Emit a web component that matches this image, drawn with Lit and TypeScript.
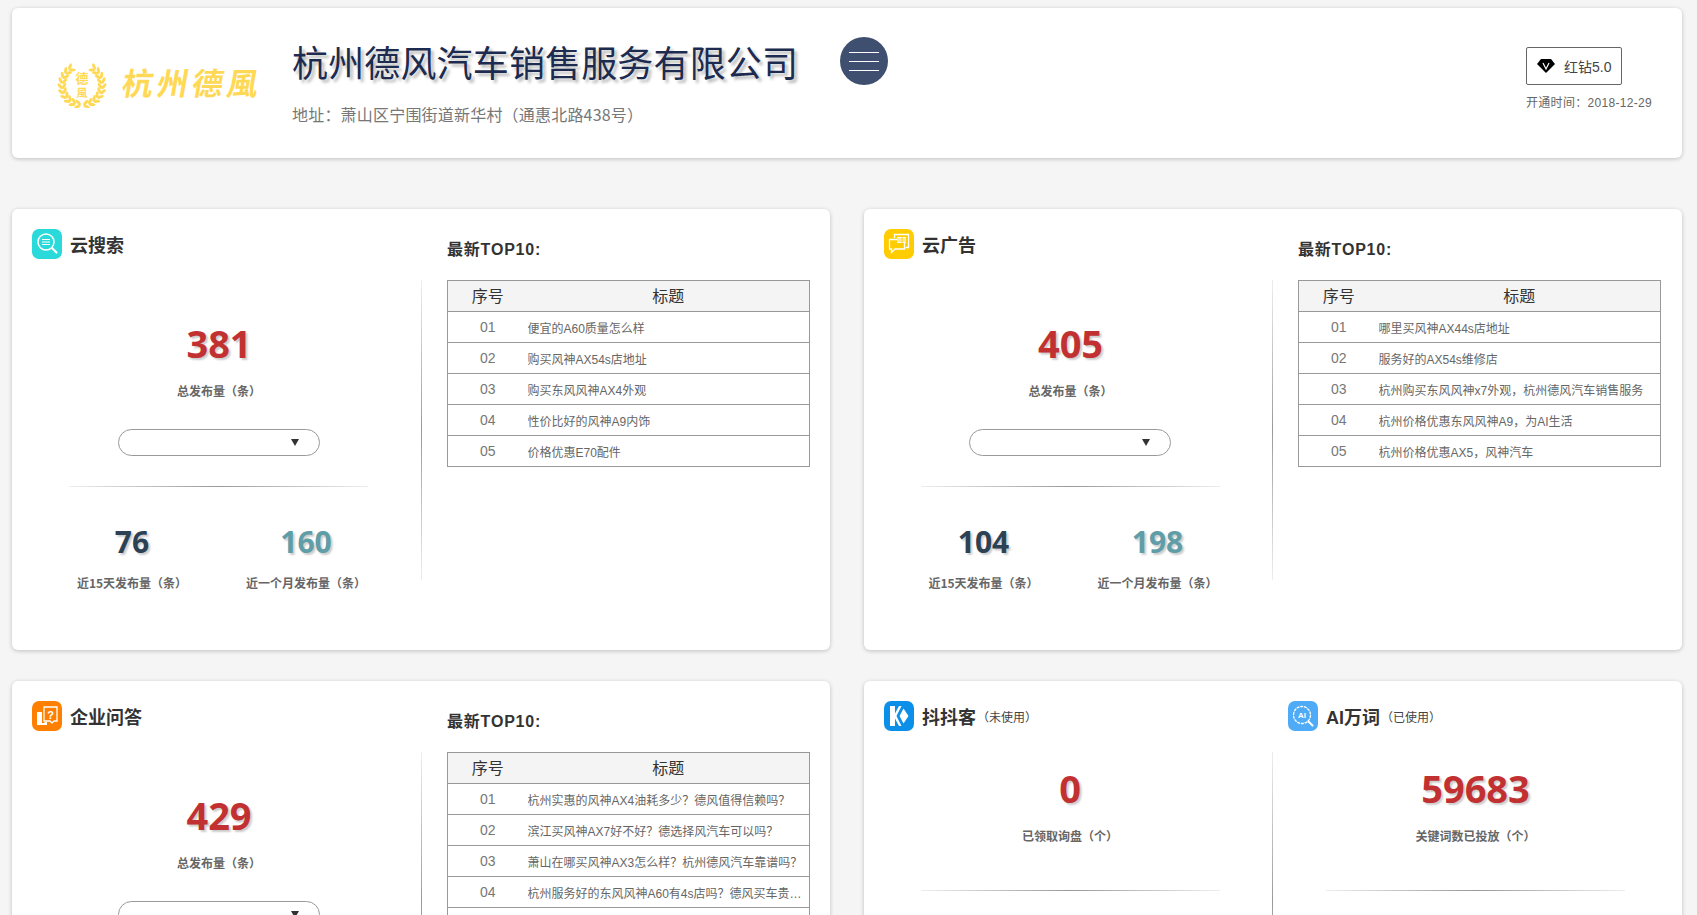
import { LitElement, html, css, svg } from "lit";
import { customElement } from "lit/decorators.js";

const icons: Record<string, any> = {
  search: svg`<circle cx="14" cy="13" r="8" fill="none" stroke="#fff" stroke-width="1.5"/>
    <path d="M10 10.500h8M10 13h8M10 15.500h8" stroke="#fff" stroke-width="1.200"/>
    <path d="M20 19l4.500 4.500" stroke="#fff" stroke-width="2.200" stroke-linecap="round"/>`,
  ad: svg`<path d="M10.500 9V5.500h14v13h-3" fill="none" stroke="#fff" stroke-width="1.300"/>
    <path d="M5.500 10.500h15v9.500H11l-3.500 3.500V20h-2z" fill="#ffcc00" stroke="#fff" stroke-width="1.300"/>
    <path d="M13 8h9v6h-9z" fill="#fff"/>
    <path d="M13 10h9M13 12h9M18 8v6" stroke="#ffcc00" stroke-width=".8"/>`,
  qa: svg`<path d="M12 6h13v14h-3l-2 2-2-2h-6z" fill="none" stroke="#fff" stroke-width="1.300"/>
    <path d="M5 11h5v11h2.500v-1H15v3H5z" fill="#fff"/>
    <text x="18.500" y="17.500" text-anchor="middle" font-size="11" font-weight="700" fill="#fff" font-family="Liberation Sans">?</text>`,
  kk: svg`<path d="M6 5h5v7.500L15 5h2.500l-5 10 5 10H15l-4-7.500V25H6z" fill="#fff"/>
    <path d="M19.500 7.500l5 7.500-5 7.500-4-7.500z" fill="#fff"/>`,
  ai: svg`<circle cx="14" cy="14" r="8.500" fill="none" stroke="#fff" stroke-width="1.300" stroke-dasharray="3 .8"/>
    <text x="14" y="17" text-anchor="middle" font-size="8" font-weight="700" fill="#fff" font-family="Liberation Sans">AI</text>
    <path d="M20.500 20.500l4 4" stroke="#fff" stroke-width="2" stroke-linecap="round"/>`,
};

type Panel = {
  icon: string; color: string; title: string; total: string;
  a?: string; b?: string; rows: string[];
};

const panels: Panel[] = [
  { icon: "search", color: "#2adada", title: "云搜索", total: "381", a: "76", b: "160",
    rows: ["便宜的A60质量怎么样", "购买风神AX54s店地址", "购买东风风神AX4外观", "性价比好的风神A9内饰", "价格优惠E70配件"] },
  { icon: "ad", color: "#ffcc00", title: "云广告", total: "405", a: "104", b: "198",
    rows: ["哪里买风神AX44s店地址", "服务好的AX54s维修店", "杭州购买东风风神x7外观，杭州德风汽车销售服务", "杭州价格优惠东风风神A9，为AI生活", "杭州价格优惠AX5，风神汽车"] },
  { icon: "qa", color: "#ff8000", title: "企业问答", total: "429",
    rows: ["杭州实惠的风神AX4油耗多少？德风值得信赖吗？", "滨江买风神AX7好不好？德选择风汽车可以吗？", "萧山在哪买风神AX3怎么样？杭州德风汽车靠谱吗？", "杭州服务好的东风风神A60有4s店吗？德风买车贵不贵？", ""] },
];

@customElement("app-root")
export class AppRoot extends LitElement {
  static styles = css`
    :host {
      display: block; height: 100vh; overflow: hidden; box-sizing: border-box;
      padding: 8px 15px 0 12px; background: #f5f5f5; color: #333;
      font-family: "Liberation Sans", "Noto Sans CJK SC", sans-serif;
    }
    .card { background: #fff; border-radius: 6px; box-shadow: 0 1px 4px rgba(0,0,0,.22); }
    .top { display: flex; align-items: flex-start; height: 150px; padding: 0 30px 0 44px; margin-bottom: 51px; }
    .logo { display: flex; align-items: center; width: 202px; height: 45px; margin-top: 54px; margin-right: 34px; color: #ffd955; }
    .logo svg { width: 52px; height: 46px; flex: none; }
    .logo-text { margin: 0 0 6px 15px; font-size: 31px; letter-spacing: 4px; white-space: nowrap; font-weight: 700; transform: skewX(-10deg); }
    .info { padding-top: 31px; }
    .name { font-size: 36px; line-height: 44px; letter-spacing: .15px; color: #1c2b4f; text-shadow: 3px 3px 3px #bbb; white-space: nowrap; font-family: "Noto Sans CJK SC", sans-serif; }
    .addr { margin-top: 19px; font-size: 16px; line-height: 24px; letter-spacing: .2px; color: #777; white-space: nowrap; font-family: "Noto Sans CJK SC", sans-serif; }
    .menu { display: flex; flex-direction: column; justify-content: center; gap: 8px; box-sizing: border-box; width: 48px; height: 48px; margin: 29px 0 0 42px; padding: 0 9px; border-radius: 50%; background: #3e4f6f; }
    .menu i { display: block; height: 1px; background: #fff; }
    .level { margin-left: auto; margin-top: 39px; width: 126px; }
    .badge { display: flex; align-items: center; box-sizing: border-box; width: 96px; height: 38px; padding-left: 10px; border: 1px solid #666; border-radius: 2px; font-size: 14px; color: #444; }
    .badge svg { width: 18px; height: 14px; margin-right: 9px; }
    .since { margin-top: 8px; font-size: 12px; line-height: 20px; color: #666; letter-spacing: .3px; white-space: nowrap; }
    .grid { display: grid; grid-template-columns: 818px 818px; column-gap: 34px; row-gap: 31px; }
    .panel { display: flex; height: 441px; }
    .half { width: 409px; flex: none; box-sizing: border-box; }
    .panel:nth-child(odd) .half.first { width: 410px; }
    .head { display: flex; align-items: center; height: 30px; margin: 20px 0 0 20px; font-size: 18px; font-weight: 700; color: #333; white-space: nowrap; }
    .head.r { margin-left: 15px; }
    .icon { width: 30px; height: 30px; flex: none; border-radius: 7px; margin-right: 8px; }
    .head small { margin-left: 1px; font-size: 12px; font-weight: 400; color: #444; font-family: "Noto Sans CJK SC", sans-serif; }
    .body { position: relative; display: flex; flex-direction: column; align-items: center; height: 300px; margin-top: 21px; padding-top: 38px; box-sizing: border-box; }
    .body.tight { padding-top: 11px; }
    .body.line::after { content: ""; position: absolute; top: 0; right: 0; bottom: 0; width: 1px; background: linear-gradient(to bottom, #eee, #999, #eee); }
    .body.pl { padding-left: 3px; }
    .body.pr { padding-right: 4px; }
    .num { font-family: "Open Sans", sans-serif; font-weight: 700; }
    .total { flex: none; font-size: 38px; line-height: 50px; color: #c23131; text-shadow: 2px 2px 2px #ccc; }
    .total.off { padding-left: 4px; }
    .lab { flex: none; font-size: 12px; line-height: 20px; color: #666; font-weight: 700; white-space: nowrap; font-family: "Noto Sans CJK SC", sans-serif; }
    .lab.off { padding-left: 4px; }
    .total + .lab { margin-top: 13px; }
    .select { display: flex; flex: none; align-items: center; justify-content: flex-end; box-sizing: border-box; width: 202px; height: 27px; margin: 28px 0 0 4px; padding-right: 20px; border: 1px solid #999; border-radius: 14px; }
    .panel:nth-child(2) .select { margin-left: 2px; }
    .select i { width: 0; height: 0; border-left: 4.500px solid transparent; border-right: 4.500px solid transparent; border-top: 7px solid #333; }
    .rule { flex: none; width: 299px; height: 1px; margin: 30px 0 0 3px; background: linear-gradient(to right, #eee, #999, #eee); }
    .rule.wide { margin-top: 44px; margin-left: 0; }
    .stats { display: grid; flex: none; grid-template-columns: 174px 174px; margin-top: 35px; text-align: center; }
    .stat { padding-left: 4px; font-size: 30px; line-height: 40px; text-shadow: 2px 2px 2px #ccc; }
    .stat.a { color: #2c4254; }
    .stat.b { color: #5f9ea8; }
    .stat + .lab { margin-top: 11px; }
    .top10 { width: 363px; margin-left: 25px; }
    .top10 h3 { margin: 30px 0 0; font-size: 16px; line-height: 22px; font-weight: 700; color: #333; letter-spacing: .8px; }
    table { width: 363px; margin-top: 19px; border-collapse: collapse; table-layout: fixed; border: 1px solid #999; }
    th, td { height: 31px; padding: 0; box-sizing: border-box; border-top: 1px solid #999; white-space: nowrap; font-weight: 400; text-align: center; }
    th { background: #f4f4f4; font-size: 16px; line-height: 16px; padding-bottom: 2px; color: #333; font-family: "Noto Sans CJK SC", sans-serif; }
    td.n { font-size: 14px; color: #777; }
    td.t { padding-right: 6px; font-size: 12px; color: #666; text-align: left; overflow: hidden; text-overflow: ellipsis; }
  `;

  private icon(name: string, color: string) {
    return html`<svg class="icon" viewBox="0 0 30 30" style="background:${color}">${icons[name]}</svg>`;
  }

  private wreath() {
    const leaves: any[] = [];
    for (const [radius, tilt] of [[22, 35], [18, -35]]) {
      for (let i = 0; i < 10; i++) {
        const deg = 78 - i * 15;
        const rad = (deg * Math.PI) / 180;
        for (const side of [-1, 1]) {
          const x = 26 + side * radius * Math.cos(rad);
          const y = 23 + radius * Math.sin(rad);
          const rot = side * (deg - 90 + tilt);
          leaves.push(svg`<ellipse cx=${x} cy=${y} rx="3.400" ry="1.500" fill="#ffd955"
            transform="rotate(${rot} ${x} ${y})"/>`);
        }
      }
    }
    return html`<svg viewBox="0 0 52 46">${leaves}
      <text x="26" y="21" text-anchor="middle" font-size="13" font-weight="700" fill="#ffd955" font-family="Noto Sans CJK SC">德</text>
      <text x="26" y="35" text-anchor="middle" font-size="11" font-weight="700" fill="#ffd955" font-family="Noto Sans CJK SC">風</text></svg>`;
  }

  private panel(p: Panel) {
    return html`<section class="card panel">
      <div class="half first">
        <div class="head">${this.icon(p.icon, p.color)}${p.title}</div>
        <div class="body line">
          <div class="num total off">${p.total}</div>
          <div class="lab off">总发布量（条）</div>
          <div class="select"><i></i></div>
          <div class="rule"></div>
          ${p.a ? html`<div class="stats">
            <div><div class="num stat a">${p.a}</div><div class="lab off">近15天发布量（条）</div></div>
            <div><div class="num stat b">${p.b}</div><div class="lab off">近一个月发布量（条）</div></div>
          </div>` : ""}
        </div>
      </div>
      <div class="top10">
        <h3>最新TOP10:</h3>
        <table>
          <colgroup><col style="width:80px" /><col /></colgroup>
          <tr><th>序号</th><th>标题</th></tr>
          ${p.rows.map((r, i) => html`<tr><td class="n">0${i + 1}</td><td class="t">${r}</td></tr>`)}
        </table>
      </div>
    </section>`;
  }

  render() {
    return html`
      <header class="card top">
        <div class="logo">${this.wreath()}<span class="logo-text">杭州德風</span></div>
        <div class="info">
          <div class="name">杭州德风汽车销售服务有限公司</div>
          <div class="addr">地址：萧山区宁围街道新华村（通惠北路438号）</div>
        </div>
        <div class="menu"><i></i><i></i><i></i></div>
        <div class="level">
          <div class="badge">
            <svg viewBox="0 0 18 14"><path d="M4 0h10l4 5-9 9-9-9z" fill="#000"/><path d="M6 4l3 6 3-6" fill="none" stroke="#fff" stroke-width="1.200"/></svg>
            红钻5.0
          </div>
          <div class="since">开通时间：2018-12-29</div>
        </div>
      </header>
      <div class="grid">
        ${this.panel(panels[0])}
        ${this.panel(panels[1])}
        ${this.panel(panels[2])}
        <section class="card panel">
          <div class="half">
            <div class="head">${this.icon("kk", "#0b8fe8")}抖抖客<small>（未使用）</small></div>
            <div class="body tight line pl">
              <div class="num total">0</div>
              <div class="lab">已领取询盘（个）</div>
              <div class="rule wide"></div>
            </div>
          </div>
          <div class="half">
            <div class="head r">${this.icon("ai", "#4fabf5")}AI万词<small>（已使用）</small></div>
            <div class="body tight pr">
              <div class="num total">59683</div>
              <div class="lab">关键词数已投放（个）</div>
              <div class="rule wide"></div>
            </div>
          </div>
        </section>
      </div>
    `;
  }
}
